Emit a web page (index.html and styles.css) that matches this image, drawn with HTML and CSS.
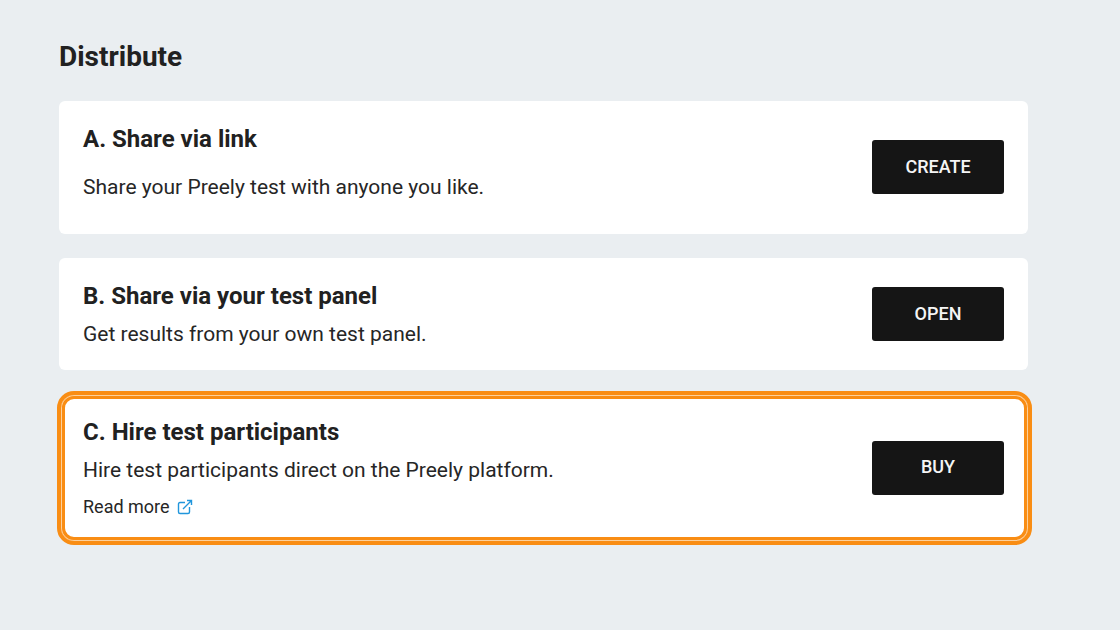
FILE: index.html
```html
<!DOCTYPE html>
<html lang="en">
<head>
  <meta charset="UTF-8">
  <meta name="viewport" content="width=device-width, initial-scale=1.0">
  <title>Distribute</title>
  <link rel="stylesheet" href="styles.css">
</head>
<body>
  <main class="distribute">
    <h1 class="page-title">Distribute</h1>

    <!-- Share via link -->
    <section class="card card-link">
      <div class="card-text">
        <h2 class="card-title">A. Share via link</h2>
        <p class="card-description">Share your Preely test with anyone you like.</p>
      </div>
      <button type="button" class="button">CREATE</button>
    </section>

    <!-- Test panel -->
    <section class="card">
      <div class="card-text">
        <h2 class="card-title">B. Share via your test panel</h2>
        <p class="card-description">Get results from your own test panel.</p>
      </div>
      <button type="button" class="button">OPEN</button>
    </section>

    <!-- Hire participants -->
    <section class="card highlighted">
      <div class="card-text">
        <h2 class="card-title">C. Hire test participants</h2>
        <p class="card-description">Hire test participants direct on the Preely platform.</p>
        <a href="#" class="read-more">Read more
          <svg class="external-icon" viewBox="0 0 16 16" aria-hidden="true">
            <path d="M8 3.5H3Q1.500 3.500 1.500 5V13Q1.500 14.500 3 14.500H11Q12.500 14.500 12.500 13V8"/>
            <path d="M6 10L14.500 1.500M10 1.500H14.500V6"/>
          </svg>
        </a>
      </div>
      <button type="button" class="button">BUY</button>
    </section>
  </main>
</body>
</html>
```
FILE: styles.css
```css
* {
  box-sizing: border-box;
}

body {
  margin: 0;
  background-color: #eaeef1;
  color: #262626;
  font-family: Roboto, "Liberation Sans", sans-serif;
}

.distribute {
  display: flex;
  flex-direction: column;
  gap: 24px;
  padding: 37px 92px 37px 59px;
}

.page-title {
  margin: 0;
  color: #212121;
  font-size: 28px;
  line-height: 40px;
  font-weight: 700;
}

.card {
  display: flex;
  justify-content: space-between;
  align-items: center;
  gap: 24px;
  padding: 24px;
  background-color: #fff;
  border-radius: 6px;
}

.card-title {
  margin: 0 0 12px;
  color: #212121;
  font-size: 24px;
  line-height: 28px;
  font-weight: 700;
}

.card-description {
  margin: 0;
  font-size: 21px;
  line-height: 24px;
}

.card-link {
  padding-bottom: 25px;
}

.card-link .card-title {
  margin-bottom: 22px;
}

.card-link .card-description {
  margin-bottom: 10px;
}

/* Double orange ring, slightly wider than the other cards */
.highlighted {
  margin: -3px -4px 0 -2px;
  padding: 23px 24px 24px 22px;
  border: 4px solid #f98d14;
  border-radius: 17px;
  box-shadow: inset 0 0 0 1px #fcd09c, inset 0 0 0 4px #f98d14;
}

.read-more {
  display: flex;
  align-items: center;
  gap: 7px;
  margin-top: 15px;
  color: inherit;
  font-size: 18px;
  line-height: 20px;
  text-decoration: none;
}

.external-icon {
  width: 16px;
  height: 16px;
  fill: none;
  stroke: #2196dc;
  stroke-width: 1.4;
}

.button {
  width: 132px;
  height: 54px;
  padding: 0 0 2px;
  flex-shrink: 0;
  border: none;
  border-radius: 3px;
  background-color: #151515;
  color: #f5f5f5;
  font-family: inherit;
  font-size: 18px;
  font-weight: 500;
  cursor: pointer;
}
```
